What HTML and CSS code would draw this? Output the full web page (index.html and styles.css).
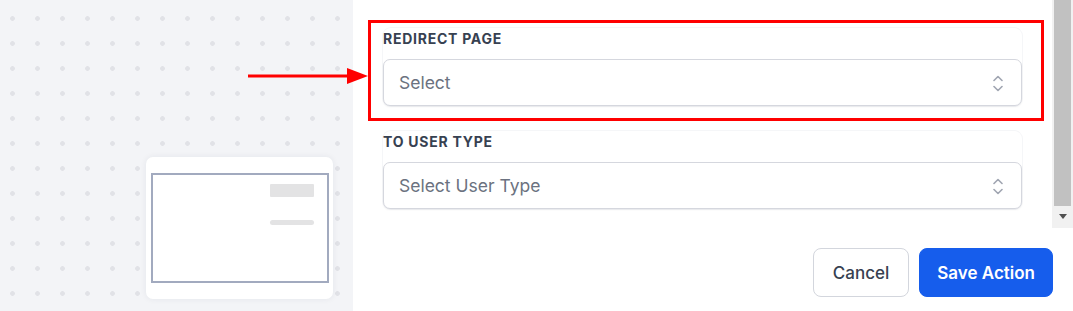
FILE: index.html
```html
<!DOCTYPE html>
<html lang="en">
<head>
<meta charset="utf-8">
<title>Redirect action</title>
<link rel="stylesheet" href="styles.css">
</head>
<body>
<div class="app">
  <aside class="canvas">
    <div class="thumb-card">
      <div class="thumb-frame">
        <div class="thumb-block"></div>
        <div class="thumb-line"></div>
      </div>
    </div>
  </aside>

  <main class="panel">
    <div class="scroll">
      <div class="scroll-content">
        <div class="field">
          <div class="field-label">REDIRECT PAGE</div>
          <div class="select">
            <span class="select-text">Select</span>
            <svg class="chev" width="10" height="17" viewBox="0 0 10 17" aria-hidden="true">
              <path d="M1 5.5 L5 1.5 L9 5.5" />
              <path d="M1 11.5 L5 15.5 L9 11.5" />
            </svg>
          </div>
        </div>
        <div class="field">
          <div class="field-label">TO USER TYPE</div>
          <div class="select">
            <span class="select-text">Select User Type</span>
            <svg class="chev" width="10" height="17" viewBox="0 0 10 17" aria-hidden="true">
              <path d="M1 5.5 L5 1.5 L9 5.5" />
              <path d="M1 11.5 L5 15.5 L9 11.5" />
            </svg>
          </div>
        </div>
      </div>
      <div class="scrollbar">
        <div class="scroll-thumb"></div>
        <div class="scroll-btn"><span class="scroll-arrow"></span></div>
      </div>
    </div>
    <div class="footer">
      <button class="btn btn-cancel">Cancel</button>
      <button class="btn btn-save">Save Action</button>
    </div>
  </main>

  <svg class="annot-arrow" width="121" height="18" viewBox="0 0 121 18" aria-hidden="true">
    <rect x="0" y="7.5" width="102" height="3" fill="#ff0000"/>
    <polygon points="99,1 120,9 99,17" fill="#ff0000"/>
  </svg>
  <div class="annot-box"></div>
</div>
</body>
</html>
```

FILE: styles.css
```css
* { box-sizing: border-box; }

html, body {
  margin: 0;
  padding: 0;
  background: #ffffff;
}

body {
  font-family: Inter, "Noto Sans", "Liberation Sans", sans-serif;
  width: 1073px;
  height: 311px;
  overflow: hidden;
}

.app {
  position: relative;
  display: flex;
  width: 1073px;
  height: 311px;
}

/* Left dotted canvas */
.canvas {
  width: 353px;
  flex: 0 0 353px;
  height: 311px;
  background-color: #f3f4f7;
  background-image: radial-gradient(circle, #e1e2e7 2px, rgba(225,226,231,0) 2.7px);
  background-size: 25px 25px;
  background-position: 0px 6px;
  display: flex;
  align-items: flex-end;
  justify-content: flex-end;
  padding: 0 20px 12px 0;
}

.thumb-card {
  width: 187px;
  height: 142px;
  background: #ffffff;
  border-radius: 7px;
  box-shadow: 0 0 6px rgba(30, 40, 70, 0.07);
  padding: 16px 4px 16px 5px;
}

.thumb-frame {
  width: 178px;
  height: 110px;
  border: 2px solid #a2aabf;
  display: flex;
  flex-direction: column;
  align-items: flex-end;
  padding: 9px 13px 0 0;
}

.thumb-block {
  width: 44px;
  height: 13px;
  background: #e3e3e4;
  border-radius: 1px;
}

.thumb-line {
  width: 44px;
  height: 5px;
  margin-top: 23px;
  background: #e3e3e4;
  border-radius: 3px;
}

/* Right panel */
.panel {
  flex: 1;
  display: flex;
  flex-direction: column;
  background: #ffffff;
}

.scroll {
  display: flex;
  height: 228px;
}

.scroll-content {
  flex: 1;
  padding: 28px 30px 0 30px;
  display: flex;
  flex-direction: column;
  gap: 25px;
}

.field {
  border-radius: 8px;
  box-shadow: 0 0 0 1px #f5f6f8;
  padding-top: 3px;
}

.field-label {
  font-size: 14px;
  line-height: 16px;
  font-weight: 700;
  color: #374151;
  letter-spacing: 0.75px;
  margin-bottom: 12px;
}

.select {
  height: 47px;
  border: 1px solid #d5d7de;
  border-radius: 7px;
  background: #ffffff;
  box-shadow: 0 1px 2px rgba(16, 24, 40, 0.06);
  display: flex;
  align-items: center;
  justify-content: space-between;
  padding: 0 18px 0 15px;
}

.select-text {
  font-size: 17.5px;
  color: #6b7280;
}

.chev {
  fill: none;
  stroke: #a0a5b1;
  stroke-width: 1.6;
  stroke-linecap: round;
  stroke-linejoin: round;
  margin-top: 1px;
}

/* Fake scrollbar */
.scrollbar {
  width: 21px;
  flex: 0 0 21px;
  background: #f1f1f1;
  display: flex;
  flex-direction: column;
  padding: 0 2px 0 2px;
}

.scroll-thumb {
  height: 206px;
  background: #c1c1c1;
}

.scroll-btn {
  flex: 1;
  display: flex;
  align-items: center;
  justify-content: center;
}

.scroll-arrow {
  width: 0;
  height: 0;
  border-left: 4.5px solid transparent;
  border-right: 4.5px solid transparent;
  border-top: 5px solid #505050;
  margin-top: -2px;
}

/* Footer */
.footer {
  display: flex;
  justify-content: flex-end;
  gap: 10px;
  padding: 20px 20px 14px 0;
}

.btn {
  height: 49px;
  border-radius: 8px;
  font-family: Inter, "Noto Sans", "Liberation Sans", sans-serif;
  font-size: 17px;
  white-space: nowrap;
  cursor: pointer;
}

.btn-cancel {
  padding: 0 19px;
  background: #ffffff;
  border: 1px solid #d3d6dd;
  color: #374151;
  font-weight: 500;
}

.btn-save {
  padding: 0 17px;
  background: #165dec;
  border: 1px solid #165dec;
  color: #ffffff;
  font-weight: 600;
}

/* Annotations overlaid on the screenshot */
.annot-arrow {
  position: absolute;
  left: 248px;
  top: 67px;
}

.annot-box {
  position: absolute;
  left: 368px;
  top: 20px;
  width: 676px;
  height: 101px;
  border: 3px solid #ff0000;
  pointer-events: none;
}
```
